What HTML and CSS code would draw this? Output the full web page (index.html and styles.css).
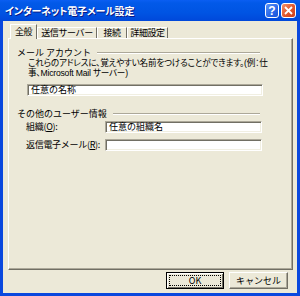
FILE: index.html
```html
<!DOCTYPE html>
<html lang="ja">
<head>
    <meta charset="UTF-8" />
    <title>インターネット電子メール設定</title>
    <link rel="stylesheet" href="styles.css">
</head>
<body>
    <div class="window">
        <div class="titlebar">
            <span class="title">インターネット電子メール設定</span>
            <div class="caption-buttons">
                <span class="cap-btn help">?</span>
                <span class="cap-btn close">
                    <svg width="9" height="9" viewBox="0 0 9 9"><path d="M1 1 L8 8 M8 1 L1 8" stroke="#fff" stroke-width="1.8"/></svg>
                </span>
            </div>
        </div>

        <div class="client">
            <div class="tabs">
                <div class="tab active" style="width:27px">全般</div>
                <div class="tab" style="width:60px">送信サーバー</div>
                <div class="tab" style="width:30px">接続</div>
                <div class="tab" style="width:41px">詳細設定</div>
            </div>

            <div class="panel">
                <div class="group-head">
                    <span>メール アカウント</span>
                    <span class="rule"></span>
                </div>
                <p class="desc">これらのアドレスに、覚えやすい名前をつけることができます。(例：仕<br>事、Microsoft Mail サーバー)</p>
                <div class="field wide">任意の名称</div>

                <div class="group-head second">
                    <span>その他のユーザー情報</span>
                    <span class="rule"></span>
                </div>
                <div class="row first">
                    <label>組織(<u>O</u>):</label>
                    <div class="field">任意の組織名</div>
                </div>
                <div class="row">
                    <label>返信電子メール(<u>R</u>):</label>
                    <div class="field"></div>
                </div>
            </div>

            <div class="buttons">
                <button class="btn default"><span>OK</span></button>
                <button class="btn">キャンセル</button>
            </div>
        </div>
    </div>
</body>
</html>
```

FILE: styles.css
```css
* {
    box-sizing: border-box;
    margin: 0;
    padding: 0;
}

body {
    font-family: "Noto Sans CJK JP", "Liberation Sans", sans-serif;
    font-size: 9px;
    color: #000;
    background: #0A48DE;
}

.window {
    width: 300px;
    height: 296px;
    background: #0A48DE;
    display: flex;
    flex-direction: column;
}

.titlebar {
    height: 21px;
    display: flex;
    align-items: center;
    padding: 0 4px 0 5px;
    background: linear-gradient(#0A5EF2, #0259E8 15%, #0054E3 60%, #0048DA);
}

.title {
    color: #fff;
    font-weight: bold;
    font-size: 10px;
    font-feature-settings: "palt";
    text-shadow: 1px 1px #0A1883;
    letter-spacing: -0.2px;
}

.caption-buttons {
    margin-left: auto;
    display: flex;
    gap: 2px;
}

.cap-btn {
    width: 15px;
    height: 15px;
    border: 1px solid #fff;
    border-radius: 3px;
    display: flex;
    align-items: center;
    justify-content: center;
    color: #fff;
    font-family: "Liberation Sans", sans-serif;
    font-weight: bold;
    font-size: 12px;
}

.help {
    width: 14px;
    background: linear-gradient(135deg, #5C93F8, #2767E8 60%, #1A55D8);
}

.close {
    background: linear-gradient(135deg, #F0906A, #E0562C 55%, #C9401C);
}

.client {
    flex: 1;
    margin: 0 3px 3px;
    background: #ECE9D8;
    padding: 3px 4px 0 5px;
}

.tabs {
    display: flex;
    align-items: flex-end;
    height: 14px;
    margin-left: 2px;
}

.tab {
    height: 11px;
    font-size: 9px;
    line-height: 10px;
    text-align: center;
    white-space: nowrap;
    border-top: 1px solid #fff;
    border-left: 1px solid #fff;
    border-right: 1px solid #716F64;
    letter-spacing: -0.4px;
}

.tab.active {
    height: 15px;
    margin-bottom: -1px;
    position: relative;
    background: #ECE9D8;
    line-height: 14px;
}

.panel {
    height: 232px;
    border: 1px solid;
    border-color: #fff #716F64 #716F64 #fff;
    box-shadow: inset -1px -1px #ACA899;
    padding: 8px 0 0 8px;
}

.group-head {
    display: flex;
    align-items: center;
    gap: 6px;
    height: 11px;
    margin-right: 32px;
    white-space: nowrap;
}

.group-head.second {
    margin-top: 12px;
}

.rule {
    flex: 1;
    height: 2px;
    border-top: 1px solid #ACA899;
    border-bottom: 1px solid #fff;
}

.desc {
    margin: 1px 0 0 11px;
    font-family: "Liberation Sans", "Noto Sans CJK JP", sans-serif;
    line-height: 9.5px;
    font-size: 8.6px;
    font-feature-settings: "palt";
    letter-spacing: -0.2px;
    white-space: nowrap;
}

.field {
    height: 12px;
    background: #fff;
    border: 1px solid;
    border-color: #ACA899 #fff #fff #ACA899;
    box-shadow: inset 1px 1px #716F64, inset -1px -1px #F1EFE2;
    padding-left: 3px;
    line-height: 10px;
    white-space: nowrap;
}

.field.wide {
    margin: 6px 0 0 10px;
    width: 236px;
}

.row {
    display: flex;
    align-items: center;
    margin-top: 5px;
    padding-left: 9px;
}

.row.first {
    margin-top: 1px;
}

.row label {
    width: 79px;
    letter-spacing: -0.3px;
    white-space: nowrap;
}

.row .field {
    width: 157px;
}

.buttons {
    display: flex;
    justify-content: flex-end;
    gap: 5px;
    margin-top: 2px;
    padding-right: 5px;
}

.btn {
    width: 59px;
    height: 17px;
    font-family: inherit;
    font-size: 9px;
    background: #ECE9D8;
    border: 1px solid;
    border-color: #fff #716F64 #716F64 #fff;
    box-shadow: inset -1px -1px #ACA899;
    color: #000;
}

.btn.default {
    width: 58px;
    border: 1px solid #000;
    box-shadow: inset 1px 1px #fff, inset -1px -1px #716F64;
    padding: 2px;
}

.btn.default span {
    display: block;
    height: 100%;
    border: 1px dotted #000;
    line-height: 9px;
}
```
